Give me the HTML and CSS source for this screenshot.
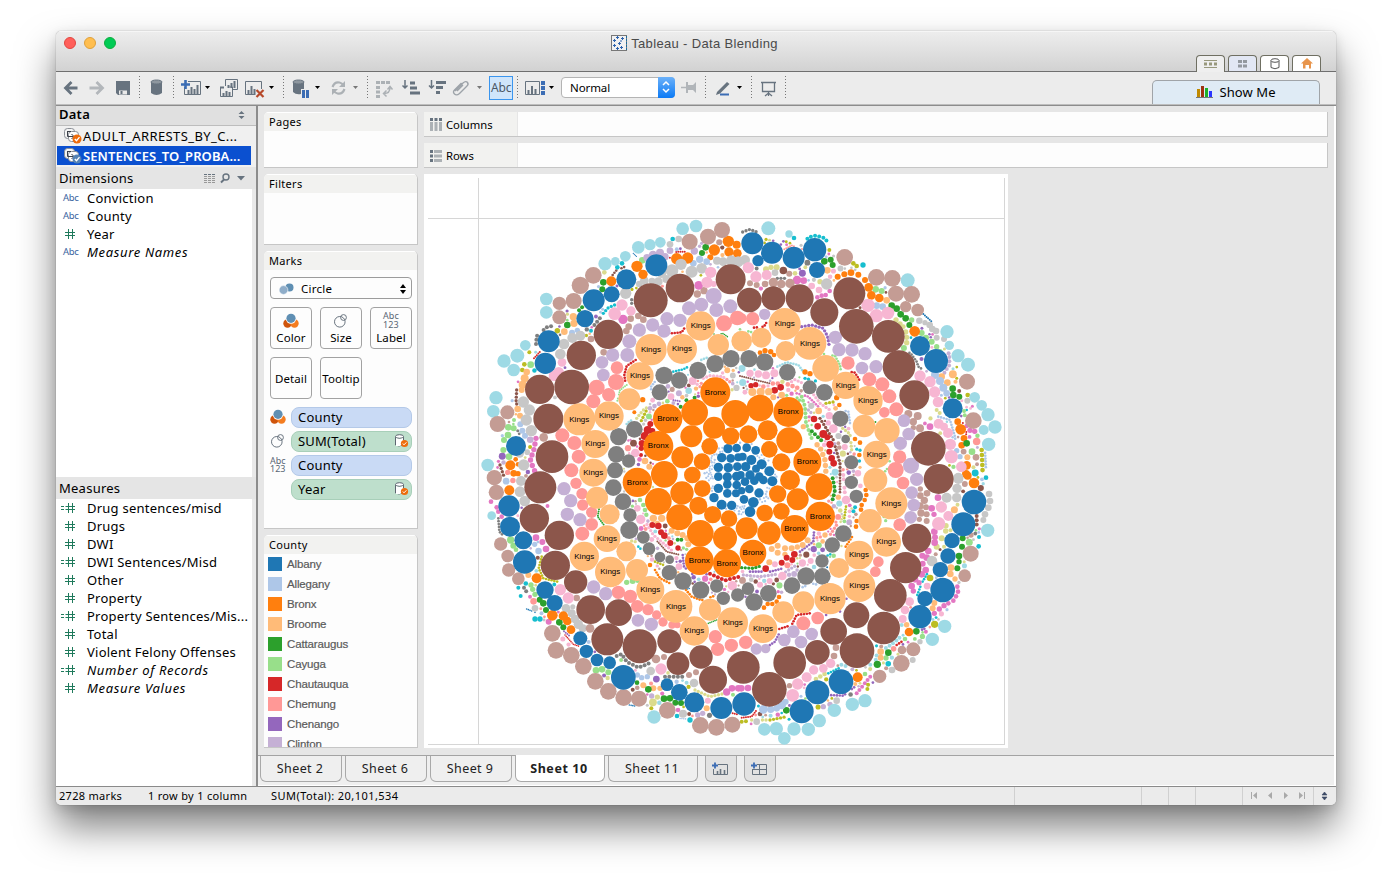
FILE: index.html
```html
<!DOCTYPE html>
<html lang="en">
<head>
<meta charset="utf-8">
<title>Tableau - Data Blending</title>
<link rel="stylesheet" href="styles.css">
</head>
<body>
<svg class="defs" width="0" height="0">
  <defs>
    <symbol id="hash" viewBox="0 0 16 12"><path d="M6.5 1v10M10.5 1v10M3 4.5h10M3 7.5h10" stroke="#1f7a5c" stroke-width="1" fill="none"/></symbol>
    <symbol id="calc" viewBox="0 0 16 12" overflow="visible"><path d="M6.5 1v10M10.5 1v10M3.500 4.5h9.500M3.500 7.5h9.500M-1 4.500h3M-1 7.500h3" stroke="#1f7a5c" stroke-width="1" fill="none"/></symbol>
    <symbol id="source" viewBox="0 0 18 16">
      <rect x=".5" y=".5" width="10" height="10" rx="3" fill="#f4f4f4" stroke="#8a8f96"/><rect x="4.500" y="3.500" width="10" height="10" rx="3" fill="#fff" stroke="#8a8f96"/>
      <path d="M3.500 3v5.500h6M7.500 6l2.500 2.500L7.500 11M3 3.500h4" stroke="#3b414a" fill="none"/><circle cx="13" cy="11" r="4.500" fill="currentColor"/><path d="M10.800 11l1.700 1.700 3-3.500" stroke="#fff" stroke-width="1.300" fill="none"/>
    </symbol>
    <symbol id="linked" viewBox="0 0 15 14"><path d="M1.500 3v8q3.500 2 7 0M9.500 3v3" stroke="#5d6670" fill="none"/><ellipse cx="5.500" cy="2.500" rx="4" ry="1.800" fill="#fff" stroke="#5d6670"/><path d="M2 4q3.500 2 7 0v6l-3 2H2z" fill="#fff"/><circle cx="10.500" cy="9.500" r="3.600" fill="#ee6c0c"/><path d="M8.800 9.500l1.200 1.300 2.400-2.500" stroke="#fff" fill="none"/></symbol>
    <symbol id="color" viewBox="0 0 16 16"><circle cx="4.500" cy="10.500" r="4.200" fill="#cf540b"/><circle cx="11.500" cy="10.500" r="4.200" fill="#f47d20"/><circle cx="8" cy="5.500" r="5.200" fill="#fff"/><circle cx="8" cy="5.300" r="4.600" fill="#5f8fb3"/></symbol>
    <symbol id="size" viewBox="0 0 16 16"><circle cx="6.800" cy="8.800" r="5.300" fill="none" stroke="#69747f"/><circle cx="10.500" cy="4.500" r="2.900" fill="none" stroke="#69747f"/></symbol>
  </defs>
</svg>
<div class="window">
  <header class="titlebar">
    <div class="lights"><i class="red"></i><i class="amber"></i><i class="green"></i></div>
    <div class="title">
      <svg width="16" height="16" viewBox="0 0 16 16"><rect x=".5" y=".5" width="15" height="15" fill="#f1f1f1" stroke="#777"/><path d="M2 5.500h3M3.500 4v3M5 2.500h3M6.500 1v3M10 3.500h3M11.500 2v3M7 8.500h3M8.500 7v3M2 10.500h3M3.500 9v3M5 13.500h3M6.500 12v3M9 12.500h3M10.500 11v3M9 6h2" stroke="#2c62ae" fill="none"/><path d="M15.500 1v14" stroke="#1c6c9c" stroke-dasharray="2 1"/></svg>
      <span>Tableau - Data Blending</span>
    </div>
    <div class="modes">
      <span class="mode current"><svg width="14" height="8"><path d="M0 .5h13M0 7.500h13" stroke="#98987c"/><path d="M0 4h14" stroke="#98987c" stroke-width="3" stroke-dasharray="3 2"/></svg></span>
      <span class="mode blue"><svg width="10" height="8"><path d="M0 1.500h10M0 6h10" stroke="#93989f" stroke-width="3" stroke-dasharray="4 1"/></svg></span>
      <span class="mode"><svg width="10" height="12"><path d="M1 2.500v7q4 2.500 8 0v-7" fill="none" stroke="#555"/><ellipse cx="5" cy="2.500" rx="4" ry="1.800" fill="#fff" stroke="#555"/></svg></span>
      <span class="mode"><svg width="12" height="11"><path d="M6 0l6 5.500H0z" fill="#e8954c"/><path d="M2 5h8v5.500H8V7H4.500v3.500H2z" fill="#e8954c"/></svg></span>
    </div>
  </header>

  <div class="toolbar">
    <svg class="seg" width="84" height="31" viewBox="56 72 84 31">
      <path d="M77.500 88H66M71.500 82l-6 6 6 6" stroke="#67737f" stroke-width="2.800" fill="none"/><path d="M89.500 88h12M96.500 82l6 6-6 6" stroke="#b3b7bb" stroke-width="2.800" fill="none"/>
      <path d="M116 81h14v14h-12l-2-2z" fill="#67737f"/><path d="M119 90.500h8v4h-8z" fill="#e9e9e9"/><path d="M120.500 91h2v3h-2z" fill="#67737f"/>
    </svg>
    <svg class="seg" width="34" height="31" viewBox="140 72 34 31"><path d="M151 82v11q5.500 4 11 0V82z" fill="#67737f"/><ellipse cx="156.500" cy="82" rx="5.500" ry="2" fill="#8e979f" stroke="#67737f"/></svg>
    <svg class="seg" width="110" height="31" viewBox="174 72 110 31">
      <path d="M188 81.500h12.500v13H184.500V87" fill="none" stroke="#67737f"/><path d="M188.500 94v-4M191.500 94v-7M194.500 94v-5M197.500 94v-9" stroke="#67737f" stroke-width="2"/><path d="M181 84.500h9M185.500 80v9" stroke="#3c6db4" stroke-width="2.600"/><path d="M205 86h5l-2.500 3z"/>
      <path d="M225.500 86v-6.500h12v10h-4.500M220.500 87v9.500h12v-9.500h-3" fill="none" stroke="#67737f"/><path d="M220 87.500h4M228.500 88v-3M231.500 88v-5M234.500 88v-7M223.500 96v-3M226.500 96v-5M229.500 96v-4" stroke="#67737f" stroke-width="2"/>
      <path d="M261.500 89v-7.500h-16v13h10" fill="none" stroke="#67737f"/><path d="M248.500 94v-4M251.500 94v-8M254.500 94v-5" stroke="#67737f" stroke-width="2"/><path d="M256.500 90l7 7M263.500 90l-7 7" stroke="#b6492a" stroke-width="2.200"/><path d="M269 86h5l-2.500 3z"/>
    </svg>
    <svg class="seg" width="84" height="31" viewBox="284 72 84 31">
      <path d="M293 82v10q3 3 8 2v-5h3v-7z" fill="#67737f"/><ellipse cx="298.500" cy="82" rx="5.500" ry="2" fill="#8e979f" stroke="#67737f"/><path d="M303.500 90v8M307.500 90v8" stroke="#3c6db4" stroke-width="3"/><path d="M315 86h5l-2.500 3z"/>
      <path d="M332.500 87q2-5.500 7-4.500 2.500.500 4 3M344.500 89q-2 5.500-7 4.500-2.500-.500-4-3" fill="none" stroke="#acb1b5" stroke-width="2.200"/><path d="M345 81v6h-6zM332 95v-6h6z" fill="#acb1b5"/><path d="M353 86h5l-2.500 3z" fill="#777"/>
    </svg>
    <svg class="seg" width="150" height="31" viewBox="368 72 150 31">
      <path d="M376 82.500h14" stroke="#acb1b5" stroke-width="3" stroke-dasharray="4 1"/><path d="M378 86v12" stroke="#acb1b5" stroke-width="4" stroke-dasharray="3 1.500"/><path d="M384 93.500q6 0 6-6M386.500 90.500l-3 3 3 3M387.500 89.500l2.500-3 2.500 3" fill="none" stroke="#acb1b5" stroke-width="1.500"/>
      <path d="M405 80v8M402.500 85.500l2.500 2.500 2.500-2.500" stroke="#67737f" stroke-width="1.500" fill="none"/><path d="M410 83h5M410 88h7M410 93h10" stroke="#67737f" stroke-width="3.200"/><path d="M431.500 80v8M429 85.500l2.500 2.500 2.500-2.500" fill="none" stroke="#67737f" stroke-width="1.500"/><path d="M436 82.500h10M436 87.500h7M436 92.500h4" stroke="#67737f" stroke-width="3.200"/>
      <path d="M455 91l8-8q3-2.500 4.500-.500t-1 4l-7 7q-3 2.500-5 .500t0-4l7-7M457 91l6-6" fill="none" stroke="#9da3a9" stroke-width="1.400"/><path d="M477 86h5l-2.500 3z" fill="#777"/>
      <rect x="489.500" y="76.500" width="23" height="23" fill="#cfe5fb" stroke="#3a95ee"/><text x="491" y="92" class="abc-tool">Abc</text>
    </svg>
    <div class="fit seg">
      <svg width="43" height="31" viewBox="518 72 43 31"><path d="M525.500 81.500h14v13h-14z" fill="none" stroke="#67737f" stroke-width="1"/><path d="M528.500 94v-4M532 94v-8M535.500 94v-5" stroke="#67737f" stroke-width="2"/><path d="M543 81v14" stroke="#3c6db4" stroke-width="4" stroke-dasharray="4 1"/><path d="M549 86h5l-2.500 3z"/></svg>
      <div class="select"><span>Normal</span><b><svg width="16" height="20"><path d="M5 8l3-3 3 3M5 12l3 3 3-3" fill="none" stroke="#fff" stroke-width="1.500"/></svg></b></div>
      <svg width="30" height="31" viewBox="675 72 30 31"><path d="M681 87.500h6" stroke="#b1b5b9" stroke-width="1.500"/><path d="M686 82h2v3h5l3-3v11l-3-3h-5v3h-2z" fill="#b1b5b9"/></svg>
    </div>
    <svg class="seg" width="46" height="31" viewBox="706 72 46 31"><path d="M717 92l10-10 2.500 2-9.500 9.500-4 1.500z" fill="#67737f"/><path d="M720 94.500h9" stroke="#3c6db4" stroke-width="2"/><path d="M737 86h5l-2.500 3z"/></svg>
    <svg class="seg" width="34" height="31" viewBox="752 72 34 31"><path d="M761 82.500h15M762.500 83v8.500h12V83M768.500 92v4M765 96l3.500-3 3.500 3" fill="none" stroke="#67737f" stroke-width="1.300"/></svg>
    <div class="showme"><svg width="17" height="13"><path d="M2.500 4v8" stroke="#c08a00" stroke-width="3"/><path d="M6.500 1v11" stroke="#9e3210" stroke-width="3"/><path d="M10.500 3v9" stroke="#1fb02a" stroke-width="3"/><path d="M14.500 6v6" stroke="#2a35ff" stroke-width="3"/><path d="M0 12.500h17" stroke="#777"/></svg>Show Me</div>
  </div>

  <main class="body">
    <aside class="data">
      <div class="head bold">Data<svg width="7" height="8"><path d="M.5 3L3.500 0l3 3zM.5 5l3 3 3-3z" fill="#67737f"/></svg></div>
      <div class="sources">
        <div class="src orange"><svg width="19" height="16" viewBox="0 0 19 16"><use href="#source" width="18" height="16"/></svg>ADULT_ARRESTS_BY_C...</div>
        <div class="src sel"><svg width="19" height="16" viewBox="0 0 19 16"><use href="#source" width="18" height="16"/></svg>SENTENCES_TO_PROBA...</div>
      </div>
      <div class="head dims">Dimensions<svg width="46" height="12"><path d="M1 2.500h12" stroke="#67737f" stroke-dasharray="3 1"/><path d="M1 4.500h12M1 6.500h12M1 8.500h12M1 10.500h12" stroke="#999" stroke-dasharray="3 1"/><circle cx="23" cy="5" r="3" fill="none" stroke="#67737f" stroke-width="1.400"/><path d="M21 7.500l-3 3" stroke="#67737f" stroke-width="2"/><path d="M34 4h8l-4 4.500z" fill="#67737f"/></svg></div>
      <ul class="fields dimlist">
        <li><em class="abc">Abc</em>Conviction</li><li><em class="abc">Abc</em>County</li>
        <li><svg width="16" height="12"><use href="#hash"/></svg>Year</li><li class="it"><em class="abc">Abc</em>Measure Names</li>
      </ul>
      <div class="head meas">Measures</div>
      <ul class="fields">
        <li><svg width="16" height="12"><use href="#calc"/></svg>Drug sentences/misd</li><li><svg width="16" height="12"><use href="#hash"/></svg>Drugs</li>
        <li><svg width="16" height="12"><use href="#hash"/></svg>DWI</li><li><svg width="16" height="12"><use href="#calc"/></svg>DWI Sentences/Misd</li>
        <li><svg width="16" height="12"><use href="#hash"/></svg>Other</li><li><svg width="16" height="12"><use href="#hash"/></svg>Property</li>
        <li><svg width="16" height="12"><use href="#calc"/></svg>Property Sentences/Mis...</li><li><svg width="16" height="12"><use href="#hash"/></svg>Total</li>
        <li><svg width="16" height="12"><use href="#hash"/></svg>Violent Felony Offenses</li><li class="it"><svg width="16" height="12"><use href="#calc"/></svg>Number of Records</li>
        <li class="it"><svg width="16" height="12"><use href="#hash"/></svg>Measure Values</li>
      </ul>
    </aside>
    <section class="work">
      <div class="canvas">
        <div class="cards">
          <div class="card pages"><h3>Pages</h3></div>
          <div class="card filters"><h3>Filters</h3></div>
          <div class="card marks"><h3>Marks</h3>
            <div class="marktype"><svg width="16" height="12"><circle cx="10.500" cy="4.500" r="4" fill="#5f8fb3"/><circle cx="4.500" cy="7" r="4.400" fill="#8fadc9" stroke="#fff" stroke-width=".6"/></svg><span>Circle</span><svg width="6" height="10"><path d="M0 4l3-4 3 4zM0 6l3 4 3-4z"/></svg></div>
            <div class="btns">
              <div class="btn"><svg width="16" height="16"><use href="#color"/></svg>Color</div>
              <div class="btn"><svg width="16" height="16"><use href="#size"/></svg>Size</div>
              <div class="btn"><small>Abc<br>123</small>Label</div>
              <div class="btn">Detail</div><div class="btn">Tooltip</div>
            </div>
            <div class="pills">
              <div class="row"><svg width="16" height="16"><use href="#color"/></svg><div class="pill">County</div></div>
              <div class="row"><svg width="16" height="16"><use href="#size"/></svg><div class="pill green">SUM(Total)<svg width="15" height="14"><use href="#linked"/></svg></div></div>
              <div class="row"><small>Abc<br>123</small><div class="pill">County</div></div>
              <div class="row"><small></small><div class="pill green">Year<svg width="15" height="14"><use href="#linked"/></svg></div></div>
            </div>
          </div>
          <div class="card legend"><h3>County</h3>
            <ul>
              <li><i class="k1"></i>Albany</li><li><i class="k2"></i>Allegany</li><li><i class="k3"></i>Bronx</li><li><i class="k4"></i>Broome</li><li><i class="k5"></i>Cattaraugus</li>
              <li><i class="k6"></i>Cayuga</li><li><i class="k7"></i>Chautauqua</li><li><i class="k8"></i>Chemung</li><li><i class="k9"></i>Chenango</li><li><i class="k10"></i>Clinton</li>
            </ul>
          </div>
        </div>
        <div class="sheet">
          <div class="shelf"><div><svg width="12" height="13"><path d="M0 1.500h12" stroke="#67737f" stroke-width="3" stroke-dasharray="3 1.500"/><path d="M0 8.500h12" stroke="#acb1b5" stroke-width="9" stroke-dasharray="3 1.500"/></svg>Columns</div></div>
          <div class="shelf"><div><svg width="12" height="12"><path d="M1.500 0v12" stroke="#67737f" stroke-width="3" stroke-dasharray="3 1.500"/><path d="M8 0v12" stroke="#acb1b5" stroke-width="8" stroke-dasharray="3 1.500"/></svg>Rows</div></div>
          <svg id="view" class="view" width="584" height="574" viewBox="424 174 584 574"></svg>
        </div>
      </div>
      <nav class="tabs">
        <span>Sheet 2</span><span>Sheet 6</span><span>Sheet 9</span><span class="on">Sheet 10</span><span class="wide">Sheet 11</span>
        <span class="add a1"><svg width="16" height="14"><path d="M6 2.500h9.500v10H1.500V7" fill="none" stroke="#67737f"/><path d="M5.500 12V9M8.500 12V7M12.500 12V8" stroke="#67737f" stroke-width="1.600"/><path d="M0 3.500h6M3 .5v6" stroke="#3c6db4" stroke-width="1.800"/></svg></span>
        <span class="add"><svg width="16" height="14"><path d="M6 2.500h9.500v10H1.500V7M1.500 7.500h14M8.500 2.500v10" fill="none" stroke="#67737f"/><path d="M0 3.500h6M3 .5v6" stroke="#3c6db4" stroke-width="1.800"/></svg></span>
      </nav>
    </section>
  </main>
  <footer class="status">
    <span class="s1">2728 marks</span><span class="s2">1 row by 1 column</span><span class="s3">SUM(Total): 20,101,534</span>
    <svg class="nav" width="322" height="18" viewBox="1014 787 322 18"><path d="M1014.500 787v18M1141.500 787v18M1168.500 787v18M1195.500 787v18M1242.500 787v18M1313.500 787v18" stroke="#d0d0d0"/><path d="M1251 792h1v7h-1zM1257 792v7l-4-3.500zM1272 792v7l-4-3.500zM1284 792v7l4-3.500zM1299 792v7l4-3.500zM1304 792h1v7h-1z" fill="#a9a9a9"/><path d="M1322 795l2.500-3 2.500 3zM1322 797l2.500 3 2.500-3z" fill="#3c4a66" stroke="#3c4a66" stroke-width=".6"/></svg>
  </footer>
</div>
<script src="chart.js"></script>
</body>
</html>
```
FILE: styles.css
```css
* { box-sizing: border-box; }
body { margin: 0; padding: 31px 56px 0; height: 885px; overflow: hidden; background: #fff; font: 13px/18px "Noto Sans", "Open Sans", sans-serif; color: #000; }
.defs { position: absolute; }
svg { display: block; flex: none; }
ul { list-style: none; margin: 0; padding: 0; }
h3 { margin: 0; }
.window { width: 1280px; height: 774px; display: flex; flex-direction: column; overflow: hidden; border-radius: 5px; background: #ebebeb; box-shadow: 0 0 1px rgba(0,0,0,.5), 0 22px 38px rgba(0,0,0,.5), 0 4px 12px rgba(0,0,0,.12); }

.titlebar { height: 41px; flex: none; display: grid; grid-template-columns: 1fr auto 1fr; background: linear-gradient(#ededed, #d2d2d2); border-bottom: 1px solid #6f6f6f; border-top: 1px solid #f6f6f6; }
.lights { display: flex; gap: 8px; padding: 5px 8px; }
.lights i { width: 12px; height: 12px; border-radius: 50%; border: 1px solid #e2463f; background: #ff5f5a; }
.lights .amber { background: #ffbe4f; border-color: #dfa03a; }
.lights .green { background: #00cb55; border-color: #0ead3e; }
.title { display: flex; gap: 4px; padding-top: 3px; padding-right: 3px; font: 13px/17px "Liberation Sans", sans-serif; letter-spacing: .34px; color: #4a4a4a; }
.modes { display: flex; justify-content: flex-end; align-items: flex-end; gap: 3px; padding-right: 15px; }
.mode { width: 29px; height: 16px; display: flex; align-items: center; justify-content: center; border: 1px solid #6f6f62; border-bottom: 0; border-radius: 4px 4px 0 0; background: #fff; }
.mode.blue { background: #e2e7f4; }
.mode.current { background: #efefef; height: 17px; margin-bottom: -1px; }

.toolbar { height: 34px; flex: none; display: flex; align-items: flex-start; background: #ececec; border-bottom: 1px solid #8c8c8c; box-shadow: inset 0 -1px #bdbdbd; }
.toolbar > .seg { background: repeating-linear-gradient(#777 0 1px, transparent 1px 3px) right 4px / 1px 22px no-repeat; }
.abc-tool { font: 12px "Noto Sans", sans-serif; letter-spacing: -.2px; fill: #4c5866; }
.fit { width: 188px; height: 31px; display: flex; align-items: flex-start; }
.select { width: 114px; height: 21px; margin: 5px 0 0; display: flex; justify-content: space-between; border: 1px solid #b4b4b4; border-radius: 4px; background: #fff; font-size: 11.5px; line-height: 19px; padding-left: 8px; letter-spacing: -.1px; }
.select b { width: 17px; margin: -1px; height: 21px; border-radius: 0 4px 4px 0; background: linear-gradient(#6bb1f9, #0c7af5); }
.showme { width: 168px; height: 24px; margin: 8px 16px 0 auto; display: flex; align-items: center; justify-content: center; gap: 6px; border: 1px solid #a0a4a8; border-bottom: 0; border-radius: 5px 5px 0 0; background: #dfebf5; letter-spacing: .1px; padding-bottom: 2px; }

.body { flex: 1; min-height: 0; display: flex; background: #fff; }
.data { width: 202px; flex: none; display: flex; flex-direction: column; border-right: 2px solid #8c8c8c; background: linear-gradient(90deg, #fff 196px, #e9e9e9 196px); }
.head { height: 20px; flex: none; padding: 0 11px 0 3px; display: flex; justify-content: space-between; align-items: center; background: #e5e5e5; letter-spacing: .25px; }
.head.bold { font-weight: 600; background: #e0e0e0; border-bottom: 1px solid #bdbdbd; line-height: 17px; padding-bottom: 2px; }
.head.dims { height: 22px; }
.head.meas { height: 22px; }
.head.dims svg { margin-right: -4px; }
.sources { height: 41px; background: #f0f0f0; }
.src { height: 19px; margin: 0 5px 1px 1px; padding-left: 7px; display: flex; align-items: center; white-space: nowrap; letter-spacing: .4px; }
.src.orange { color: #ee6c0c; -webkit-text-fill-color: #000; }
.src.sel { background: #0b50d0; color: #5583b5; -webkit-text-fill-color: #fff; font-weight: 600; letter-spacing: .1px; }
.fields li { height: 18px; display: grid; grid-template-columns: 25px 1fr; align-items: center; padding-left: 6px; letter-spacing: .24px; white-space: nowrap; line-height: 18px; }
.fields svg { overflow: visible; }
.dimlist { height: 288px; }
.fields .it { font-style: italic; letter-spacing: .65px; }
.abc { font: 9.500px/18px "Noto Sans", sans-serif; color: #3a63a0; letter-spacing: -.3px; padding-left: 1px; }

.work { flex: 1; min-width: 0; display: flex; flex-direction: column; }
.canvas { height: 649px; flex: none; display: flex; gap: 6px; padding: 6px 6px 0 6px; background: #e6e6e6; margin-right: 2px; }
.cards { width: 154px; display: flex; flex-direction: column; gap: 6px; }
.card { background: #fdfdfd; border: solid #c6c6c6; border-width: 0 1px 1px 0; border-radius: 5px 5px 0 0; overflow: hidden; }
.card h3 { height: 19px; padding-left: 5px; background: #f2f2f0; font-size: 11px; font-weight: 400; line-height: 17px; letter-spacing: .3px; border-top: 1px solid #fff; }
.pages { height: 56px; } .filters { height: 71px; } .marks { height: 278px; } .legend { height: 213px; }
.marktype { height: 22px; margin: 7px 5px 8px 6px; padding: 1px 5px 0 8px; display: flex; align-items: center; gap: 6px; border: 1px solid #9c9c9c; border-radius: 4px; font-size: 11.500px; letter-spacing: .25px; }
.marktype span { flex: 1; }
.btns { display: grid; grid-template-columns: repeat(3, 42px); grid-auto-rows: 42px; gap: 8px; padding-left: 6px; }
.btn { display: flex; flex-direction: column; align-items: center; justify-content: center; border: 1px solid #a2a2a2; border-radius: 4px; font-size: 11.500px; line-height: 14px; letter-spacing: .1px; padding-top: 1px; gap: 2px; }
small { font-size: 9px; line-height: 8.500px; color: #596674; width: 16px; }
.pills { padding: 7px 5px 0 6px; display: flex; flex-direction: column; gap: 2px; }
.row { display: flex; align-items: center; gap: 5px; height: 22px; }
.row small { flex: none; }
.pill { flex: 1; height: 21px; padding: 0 2px 0 6px; display: flex; align-items: center; justify-content: space-between; border: 1px solid #b4c9e8; border-radius: 8px; background: #c9daf5; letter-spacing: .2px; }
.pill.green { background: #bedfcc; border-color: #a8cfb9; }
.legend ul { font: 11.500px/20px "Liberation Sans", sans-serif; color: #5a5a5a; -webkit-text-stroke: .2px #5a5a5a; letter-spacing: -.15px; }
.legend li { height: 20px; padding-left: 4px; display: flex; align-items: center; gap: 5px; }
.legend i { width: 14px; height: 14px; }
.k1 { background: #1f77b4; } .k2 { background: #aec7e8; } .k3 { background: #ff7f0e; } .k4 { background: #ffbb78; } .k5 { background: #2ca02c; }
.k6 { background: #98df8a; } .k7 { background: #d62728; } .k8 { background: #ff9896; } .k9 { background: #9467bd; } .k10 { background: #c5b0d5; }
.sheet { flex: 1; display: flex; flex-direction: column; gap: 6px; }
.shelf { height: 25px; background: #fdfdfd; border: solid #c6c6c6; border-width: 0 1px 1px 0; }
.shelf div { width: 94px; height: 24px; padding: 1px 0 0 6px; display: flex; align-items: center; gap: 4px; background: #f2f2f0; border-right: 1px solid #e6e6e6; font-size: 11.250px; letter-spacing: 0; }
.view { background: #fff; }
.view text { font: 8px "Liberation Sans", sans-serif; text-anchor: middle; }

.tabs { height: 30px; display: flex; align-items: flex-start; gap: 3px; margin-right: 2px; padding-left: 2px; background: #efefef; border-top: 1px solid #a3a3a3; }
.tabs span { width: 82px; height: 26px; display: flex; align-items: center; justify-content: center; border: 1px solid #a9a9a9; border-top: 0; border-radius: 0 0 6px 6px; font-size: 12.500px; letter-spacing: .4px; padding-right: 2px; color: #222; }
.tabs .on { width: 90px; background: #fff; font-weight: 700; margin-top: -1px; height: 27px; padding-top: 1px; letter-spacing: .6px; }
.tabs .wide { width: 90px; }
.tabs .add { width: 32px; background: #e2e2e2; margin-right: 4px; }
.tabs .a1 { margin-left: 4px; }
.status { height: 19px; flex: none; display: flex; border-top: 1px solid #8a8a8a; background: #ebebeb; padding-left: 3px; font-size: 11px; line-height: 18px; letter-spacing: .3px; }
.s1 { width: 89px; } .s2 { width: 123px; } .s3 { letter-spacing: .45px; }
.nav { margin-left: auto; }
```
FILE: chart.js
```js
// Packed-circle view. Marks are stored per tile in thirds of a pixel: x, y, radius.
const COLORS = { B:'#1f77b4', b:'#aec7e8', O:'#ff7f0e', o:'#ffbb78', G:'#2ca02c', g:'#98df8a', R:'#d62728', r:'#ff9896', P:'#9467bd', p:'#c5b0d5', N:'#8c564b', n:'#c49c94', M:'#e377c2', m:'#f7b6d2', Y:'#7f7f7f', y:'#c7c7c7', L:'#bcbd22', l:'#dbdb8d', C:'#17becf', c:'#9edae5' };
const TILES = [
 { left:480, top:210,
  kings:'662,348,44 513,419,47 606,417,45 480,498,41 298,628,48 387,618,44 346,702,42 340,788,42',
  bronx:'706,547,45 563,626,44 535,708,45',
  N:'512,271,51 600,234,43 752,208,45 385,373,44 304,436,44 275,531,52 179,538,44 205,626,45 216,740,49',
  B:'529,166,33 439,208,30 395,253,24 341,271,33 315,326,26 206,394,33 196,460,32 108,708,30 744,716,14 770,714,13 725,743,14 752,745,13 775,742,12 715,772,14 745,773,14 772,770,13 715,800,13 742,801,14 770,799,14',
  c:'648,48,19 608,56,19 475,112,19 510,104,17 541,97,16 436,139,16 375,161,20 406,154,13 199,267,19 199,307,19 136,406,16 112,437,21 72,453,20 101,480,19 48,563,20 40,604,19 23,765,19',
  n:'726,60,24 684,80,24 629,95,24 340,196,25 301,226,26 281,273,24 238,280,20 238,322,21 82,607,21 53,642,24 43,803,23 191,682,13 371,427,10 333,387,10 475,318,10 452,326,10 490,329,10 446,350,10 439,363,10 652,252,11 672,242,11',
  o:'715,404,32 448,568,33 140,486,10 134,505,12 128,524,12 125,540,9 280,320,11 282,340,11 253,365,10 113,597,10 120,617,9 495,753,10 508,770,9',
  Y:'552,496,26 598,511,25 539,547,24 654,481,26 705,461,26 753,446,26 463,658,25 416,680,26 409,733,25 446,753,20 405,781,24',
  O:'644,607,40 766,612,42 702,653,33 634,679,33 752,678,26 689,709,25 607,742,33 666,755,25 553,793,40 590,146,17 623,144,17 703,120,17 745,94,17 747,126,14 770,104,12 772,130,13 471,169,17 489,193,14 394,214,15 691,142,9 91,766,15 488,569,8 463,607,6 107,748,7 114,763,7 101,790,10 114,791,8',
  r:'732,340,24 772,324,22 411,473,19 408,516,24 350,533,24 386,554,20 340,574,21 247,676,21 283,699,21 296,740,21 274,781,21',
  p:'701,258,24 664,284,21 627,295,21 709,300,21 751,289,21 561,326,20 600,331,20 518,345,20 478,360,20 552,363,20 448,394,21 398,435,20 442,435,21 366,457,19 370,495,19 519,135,13 540,128,12 555,140,11 501,143,11 570,122,10 643,123,11',
  m:'692,187,17 681,217,17 701,222,9 426,285,17 453,303,14 404,311,19 222,497,16 236,487,16 246,457,13 466,729,13 638,513,12 573,560,10',
  y:'576,182,19 603,163,17 635,185,18 665,175,16 545,190,14 559,207,12 516,213,10 493,212,13 478,222,10 437,250,17 535,215,13 252,402,16 277,384,15 301,377,15 241,432,16 130,576,17 148,600,17 139,630,17 154,662,17 131,765,17 119,730,13 754,152,16 775,155,16 729,155,13 711,152,12 570,103,10 596,87,10',
  R:'511,642,9 503,660,12 517,663,9 494,678,12 486,700,10 484,715,8 483,735,6',
  G:'677,112,10 666,129,9 370,217,10 367,238,9 262,345,10',
  g:'487,151,10 152,464,10 85,652,10 101,655,9 102,630,6 84,675,10 72,690,9 87,740,10 70,720,9',
  M:'656,226,13 429,328,14', b:'640,160,10 659,148,11 680,155,10 292,361,8 276,368,9 121,643,9 127,662,9 135,677,9',
  L:'127,480,7 133,463,7 148,427,6', C:'578,87,7 412,172,7 426,160,7 333,362,6', l:'373,187,7' },
 { left:740, top:210,
  kings:'134,342,48 210,400,49 317,526,41 384,572,44 410,733,41', bronx:'145,606,45 202,756,42',
  N:'28,270,37 100,265,36 179,265,42 253,307,42 328,250,48 349,349,52 445,379,49 477,470,49 523,556,45 565,715,52',
  B:'37,100,33 96,128,33 161,143,33 224,119,35 231,180,24 54,152,17 540,408,30 588,453,36 638,595,30 20,713,13 47,721,13 8,740,12 34,750,15 65,763,15 17,770,14 48,776,12 88,784,15 2,795,12 30,795,14 58,800,13',
  c:'85,55,21 147,72,11 503,211,21 621,365,20 628,406,14 654,437,20 684,464,21 704,562,16 725,586,16 744,614,20 731,660,15 765,651,20 746,703,20',
  n:'314,142,25 409,202,25 457,205,25 468,251,24 515,253,25 497,290,17 533,300,19 681,515,24 700,632,25 30,220,9 50,225,9 75,222,10 100,217,14 124,222,13 150,220,14 505,612,12 533,618,12 520,635,11 540,655,12 520,653,8 708,742,10',
  o:'5,393,31 64,383,30 137,423,30 257,475,40 372,648,34 441,662,38 262,181,10 440,271,10 37,546,12 62,545,12 86,545,11 100,562,9 125,555,10 605,500,10 622,518,10 682,742,9',
  Y:'27,446,26 74,456,26 142,487,25 209,532,21 253,547,25 301,626,24 317,687,13 334,757,21',
  O:'60,594,40 83,661,30 25,673,27 148,691,39 88,718,25 124,757,27 293,200,9 313,193,9 333,188,10 355,194,9 375,210,9 386,232,13 394,256,13 418,264,13 524,364,16 653,635,10 662,658,16 672,685,10 665,706,10 680,766,13 678,792,12 195,486,8 210,491,8 60,428,7 75,422,8 92,425,8 102,435,7 290,563,8 298,585,7 345,687,7 360,698,7 358,735,7',
  r:'38,326,20 4,325,16 324,459,20 388,508,21 427,523,21 448,559,21 469,598,21 433,607,16 479,741,20 467,780,24',
  p:'74,313,17 286,382,20 297,419,20 336,420,20 375,431,20 366,474,19 408,470,20 492,632,19 506,672,19 481,700,20 513,767,24',
  m:'25,173,17 48,200,17 80,195,15 384,286,20 409,317,20 444,309,19 540,498,17 570,515,17 584,546,17 594,576,16 596,641,15 612,650,12 624,669,15 631,703,17 634,740,20 664,770,16 237,240,10 215,228,10 78,496,12 103,490,12 55,492,11 30,490,11 280,656,13 268,617,11',
  M:'171,210,13 191,212,10 232,262,7 245,257,7 257,255,7 269,243,7 570,650,10 690,661,8 704,664,8 680,648,7',
  G:'253,154,10 272,149,9 278,165,9 455,287,10 470,296,10 482,313,10 497,325,10 508,345,9 638,536,10 640,555,10 658,560,9 680,700,10',
  g:'407,238,10 425,243,9 545,369,9 558,383,9 575,395,9 590,410,8 600,425,8 515,330,8 696,725,10',
  y:'260,222,17 105,188,10 569,345,10 577,357,10 588,363,10 590,383,9 612,387,9 655,803,15 15,150,15 555,338,8 682,572,9',
  R:'222,627,10 233,649,10 250,672,12 262,682,9 270,703,11 268,725,9 275,745,10 281,760,10 104,541,10 122,532,10 33,527,8 47,524,8',
  b:'410,287,10 428,290,10 585,495,12 600,513,12 610,533,12 620,550,10 650,722,8 660,740,8',
  l:'78,178,9 93,172,8 110,172,9 165,190,7 240,215,8 468,330,8 480,342,8 490,350,7 497,366,8 500,382,8 500,398,8', L:'340,160,7 350,168,7 683,555,7 268,120,6', C:'369,165,8 162,84,7 680,600,4' },
 { left:480, top:475,
  kings:'381,191,40 313,244,44 391,291,46 511,345,42 588,394,49 643,468,44 758,443,46', bronx:'472,22,44 658,257,43 741,265,42',
  N:'181,37,48 163,130,44 238,181,44 226,271,44 287,321,35 332,404,43 416,413,40 382,493,48 479,514,51 568,499,36 594,566,34 663,546,35 699,614,42',
  B:'87,93,32 90,155,30 130,196,27 134,261,35 195,345,26 224,384,24 301,490,21 319,529,20 351,555,19 389,563,19 430,607,37 561,629,19 598,652,25 643,682,30 724,699,33 715,40,14 702,68,14 742,28,13 770,30,13 742,55,13 768,55,12 725,89,15 755,91,14',
  c:'35,122,13 522,726,20',
  n:'49,52,23 62,207,20 83,243,19 86,285,20 115,311,19 217,475,25 228,526,25 274,541,25 310,574,25 346,619,25 385,649,25 431,668,25 477,671,24 562,706,25 661,751,25 709,757,25 757,749,24 290,369,10 330,460,13 528,552,13 552,546,9 627,600,9 648,592,9',
  o:'351,68,33 389,118,30 439,229,30 471,285,33 690,404,33 490,631,9 520,130,11 545,130,11 532,145,8 575,167,9 592,175,9 608,180,9 622,190,9 625,208,9 520,640,9 540,640,8 680,700,9 145,300,9',
  Y:'400,38,25 429,80,25 450,120,20 448,165,27 490,187,19 507,221,19 540,246,16 569,254,13 568,293,23 609,318,26 662,345,26 710,333,20 730,370,20 773,360,20',
  O:'535,79,40 606,54,35 667,41,25 655,92,27 598,127,39 661,175,40 735,189,36 698,119,26 747,131,25 637,0,25 88,46,15 170,310,15 217,421,16 250,423,14 262,438,13 273,464,13 510,270,7',
  r:'288,25,17 306,56,17 308,90,17 335,112,17 335,148,19 307,176,21 415,352,20 451,364,20 472,394,19 504,404,17 530,420,14 549,441,14 576,450,11 592,450,10 706,485,20 713,523,20 754,511,20',
  p:'252,41,20 272,77,20 262,118,20 300,134,20 341,336,20 377,356,20 474,436,19 514,448,20 515,663,8 653,720,8 668,715,8',
  m:'241,344,17 265,369,17 543,582,17 482,133,14 472,100,10 597,275,10 757,332,14',
  y:'123,18,15 120,50,16 134,78,16 165,400,10 258,400,13 275,415,12 285,432,13 295,448,14 308,460,12 512,588,13 642,624,13 609,716,12',
  M:'168,188,10 187,201,9 198,222,10 206,440,9 594,705,7 740,651,11 756,640,10 775,640,10 33,80,7 50,97,7 65,125,7 55,110,7',
  g:'92,195,11 100,212,9 108,224,7 348,586,10 366,583,10 385,592,9 458,318,9 440,322,8 473,317,7 153,330,8 158,343,8 165,358,8 480,75,7 490,90,7 495,105,7',
  G:'179,374,9 190,385,10 198,405,9 238,442,10 250,457,9 505,643,10 552,671,10 570,670,10 586,683,9 603,684,9 471,623,7 593,194,6 604,194,6',
  R:'517,150,9 535,153,10 543,172,9 553,182,10 571,204,9 594,219,8', C:'115,338,6 122,363,6 165,432,8 180,432,8 591,723,7 630,735,8', b:'472,600,8 485,608,8 502,605,8', L:'514,700,6' },
 { left:740, top:475,
  kings:'454,85,48 439,201,44 357,240,43 358,333,48 270,371,47 69,461,43', bronx:'241,124,44 164,162,42 39,234,40',
  N:'596,12,45 530,190,44 497,278,47 451,361,49 349,421,39 431,459,49 281,469,40 351,527,52 232,532,37 149,563,49 88,643,52 10,577,49 60,717,7',
  B:'702,81,37 670,148,36 636,197,23 624,243,23 601,284,23 608,345,37 555,371,23 540,425,35 303,620,37 232,652,36 185,709,36 12,687,35 97,19,15 70,15,13 43,17,13 57,54,14 28,42,13 40,82,16 12,73,13 30,110,16 15,20,13 5,47,11',
  c:'743,166,20 614,454,20 577,493,20 375,677,20 337,688,20 283,706,20 238,737,20 205,763,20 162,762,20 133,790,19 109,761,20 73,763,19',
  n:'692,236,24 674,302,19 520,523,21 486,525,13 484,565,25 419,604,20 288,518,10 282,543,10 541,42,8 541,62,10 561,55,10 553,76,11 540,93,11 558,97,9 543,114,11 560,118,9 538,133,8 560,138,9 693,180,8',
  o:'406,15,36 390,137,35 297,279,30 190,382,33 130,412,33 95,222,9 113,212,9 113,233,9 135,220,9 135,238,8 155,220,9 172,216,8 188,210,9 203,196,9 88,262,9 255,180,8 633,278,10 631,297,10 645,312,8 583,384,9 578,400,9 422,530,10 422,548,9',
  Y:'334,22,20 349,64,20 310,176,25 277,210,23 246,258,20 198,303,26 247,304,25 156,332,25 85,355,25 42,381,26 24,341,19',
  O:'237,35,40 150,15,30 113,57,26 173,73,33 74,114,25 124,109,25 20,160,33 87,174,35 702,24,16 683,2,12 507,471,13 353,607,15 377,45,7 379,60,7 374,75,7 365,90,7 363,104,7 350,138,7 348,155,7 72,398,7 83,387,7 97,387,7 110,380,7 117,366,7',
  r:'489,24,19 479,149,19 415,260,16 406,290,16 233,429,19 190,445,21 17,502,20',
  p:'530,13,20 515,53,19 521,90,19 512,127,19 160,470,19 133,495,19 183,501,19 215,477,19 49,522,17 77,521,14 250,695,8 270,688,8',
  m:'604,96,17 625,123,15 596,146,20 509,380,13 495,405,13 488,432,12 221,585,14 250,580,13 272,565,14 200,607,15 173,627,17 158,661,19 318,75,13 187,264,11 212,258,9 127,303,13 89,318,9 60,329,9',
  y:'655,12,15 651,40,14 650,68,14 620,68,15 576,258,16 747,57,10 750,78,10 745,98,10 735,118,10 730,135,9 290,677,10 50,740,10 456,585,10 518,555,9 540,500,8',
  M:'594,68,10 575,100,10 582,118,8 583,170,10 585,187,9 584,203,10 565,228,10 547,242,9 560,248,10 548,266,9 557,285,10 545,298,10 525,313,10 537,323,8 515,333,10 520,348,8 652,335,7 654,350,7 648,364,7 640,377,7 625,385,7 612,392,8 598,402,8 583,415,8 4,640,10 24,639,10',
  G:'668,190,9 666,215,9 657,243,10 657,260,8 652,280,9 529,469,10 445,533,10 412,568,11 139,706,10',
  b:'70,703,13 92,703,11 110,700,10 125,690,13 137,680,9', l:'618,152,8 617,168,8 605,190,9 590,215,9 612,215,6',
  g:'437,137,5 432,125,5 495,492,7 375,597,7 438,549,8', C:'716,214,7 717,186,6 738,8,7',
  R:'140,248,9 163,238,10 125,263,9 157,255,9 77,281,10' }
];
// Strings of small equal dots: tile, colour, radius, polyline.
const CHAINS = [
 [0,'R',4,'533,395 545,380 572,370 605,367 613,355'],[0,'R',4,'467,450 440,468 433,495 436,516'],[0,'G',2.5,'702,372 730,371 742,380'],
 [0,'g',3,'412,572 420,540 442,524'],[0,'G',6,'288,310 308,290'],[0,'M',8,'168,685 160,728 150,745 158,770 165,785'],[0,'C',5,'370,310 385,293 408,283'],
 [0,'N',4,'398,195 408,182 440,168'],[0,'Y',6,'335,355 362,322 382,305'],[0,'Y',6,'168,402 170,378 200,352 215,348'],[0,'R',3,'162,445 180,425'],
 [0,'B',2,'460,130 470,140'],[0,'m',5,'670,505 690,497 730,500 753,540'],[0,'r',5,'660,530 672,500 720,492 755,520'],[0,'C',4,'580,485 610,478 625,470'],
 [0,'c',4,'625,468 670,447 700,437'],[0,'b',4,'515,555 513,530 525,515'],[0,'p',7,'510,595 540,580 580,583'],[0,'G',6,'602,590 620,570 655,560'],
 [0,'l',5,'470,625 490,600 520,580'],[0,'L',5,'484,632 500,600'],[0,'c',4,'440,642 450,632 495,630'],[0,'P',3,'580,570 605,575'],[0,'b',3,'712,710 695,740 688,780 700,808'],
 [0,'L',5,'308,395 322,372'],[0,'Y',5,'455,280 455,260'],[0,'N',5,'110,540 108,580 118,590'],[0,'R',3,'560,152 590,125 615,125'],[0,'p',5,'640,135 665,100'],[0,'N',5,'60,765 72,800'],
 [1,'C',6,'195,97 205,82 228,77 255,85 265,100'],[1,'P',4,'75,100 100,92 125,105'],[1,'r',3,'133,118 155,106 188,118'],[1,'Y',5,'8,66 30,58 50,66'],
 [1,'P',5,'185,350 215,345 250,355 263,380 268,410'],[1,'R',4,'318,484 345,488 358,510 360,528'],[1,'R',4,'42,353 72,350 79,338'],[1,'Y',4,'484,420 512,430 530,455 535,470 550,480'],
 [1,'Y',5,'112,205 145,205'],[1,'c',4,'112,470 140,457 175,465 190,485'],[1,'g',4,'252,432 285,438 300,465 303,485'],[1,'g',6,'185,560 195,590 198,640 215,685'],[1,'G',6,'206,655 245,692'],
 [1,'g',5,'140,556 175,565 190,590'],[1,'o',8,'190,650 215,690 240,712 255,750 258,790'],[1,'N',3,'0,498 40,508 90,520'],[1,'r',7,'70,530 100,520 140,522 185,538'],
 [1,'m',5,'145,500 200,525 240,580 270,600'],[1,'M',4,'170,550 205,560 240,595'],[1,'N',5,'240,625 280,690 300,760 300,800'],[1,'p',5,'205,600 245,640 290,710'],
 [1,'b',4,'300,600 325,605 330,640'],[1,'l',5,'308,655 330,672 335,720'],[1,'C',5,'340,715 360,720 358,760'],[1,'L',5,'258,580 285,575'],[1,'C',5,'195,505 235,515'],[1,'g',4,'440,705 452,730 447,770 430,790'],
 [1,'G',3,'388,618 408,638'],[1,'g',4,'0,358 40,368'],[1,'p',6,'600,430 628,430 628,465 612,490'],[1,'b',4,'735,720 738,780'],[1,'L',7,'725,720 728,790'],[1,'g',6,'670,590 680,650'],[1,'R',3,'655,625 680,650 678,680'],
 [1,'B',3,'550,312 575,335'],[1,'N',6,'645,540 665,545'],[1,'b',4,'595,620 630,630 645,680 650,740'],[1,'l',6,'590,600 610,620'],
 [2,'L',4,'185,245 176,280 190,310 232,320'],[2,'Y',6,'410,543 425,537 440,560 475,578 515,562'],[2,'Y',6,'555,605 612,605'],[2,'O',4,'618,345 635,365 665,376 705,362'],[2,'O',4,'525,285 540,310 570,325'],
 [2,'G',3,'357,103 353,125 372,150'],[2,'P',4,'608,240 612,275 635,297 685,298'],[2,'R',6,'690,296 705,303 735,316 778,305'],[2,'R',2.5,'255,480 280,508 300,515'],[2,'P',3,'247,465 268,482'],
 [2,'P',4,'305,113 322,127'],[2,'l',5,'455,198 490,205'],[2,'C',4,'475,215 500,240'],[2,'L',4,'525,260 555,272'],[2,'m',5,'490,130 520,180 580,230'],[2,'M',5,'500,145 530,190 575,215'],
 [2,'N',3,'515,180 560,230 600,240'],[2,'g',5,'600,215 625,225'],[2,'Y',4,'55,130 58,170 68,180'],[2,'B',2.5,'448,690 475,695 495,690'],[2,'B',2.5,'140,402 165,412'],[2,'Y',6,'132,338 145,360'],[2,'l',5,'645,645 690,665 735,655'],
 [2,'G',2.5,'685,445 710,435'],[2,'B',2.5,'590,330 610,345 630,340'],[2,'R',3,'758,715 780,720'],[2,'b',2.5,'595,730 620,732'],
 [3,'R',4,'118,462 155,450 170,420 210,415'],[3,'P',4,'75,520 105,500 118,475'],[3,'P',4,'250,422 300,410 320,370'],[3,'c',6,'485,450 478,490 445,515 412,532 405,565 350,582 300,568'],
 [3,'G',5,'5,278 40,280 65,272'],[3,'G',6,'278,10 285,45 275,85'],[3,'o',7,'258,0 262,40 272,70'],[3,'L',4,'318,95 312,135'],[3,'C',6,'350,85 340,110'],[3,'l',4,'325,85 300,145'],
 [3,'N',4,'300,0 300,60'],[3,'m',6,'310,0 315,60'],[3,'C',4,'255,245 300,225'],[3,'C',5,'265,250 300,215'],[3,'B',3,'265,245 260,290'],[3,'b',4,'180,340 215,325 235,330'],[3,'P',4,'30,290 90,290 130,280'],
 [3,'p',5,'10,300 60,305 130,295 170,270'],[3,'n',5,'60,310 100,300'],[3,'P',4,'180,230 220,200 222,170'],[3,'r',5,'220,190 270,180 290,150'],[3,'N',6,'710,110 710,155 690,190'],
 [3,'C',4,'565,290 545,325 530,365'],[3,'P',4,'575,435 550,465 530,460'],[3,'P',4,'265,660 310,662 345,635'],[3,'C',4,'265,595 300,578'],[3,'l',7,'215,620 265,590'],[3,'R',3,'5,728 35,725 50,705'],
 [3,'L',6,'5,740 25,738'],[3,'l',5,'35,735 80,735'],[3,'L',5,'90,735 140,725'],[3,'R',4,'470,510 485,500'],[3,'M',6,'350,655 395,600'],[3,'L',6,'380,655 385,625'],[3,'O',4,'317,215 340,180']
];
const marks = [], labels = [], cells = new Map();
function add(color, x, y, r) {
  marks.push([color, x, y, r]);
  for (let i = Math.floor((x - r) / 12); i <= (x + r) / 12; i++)
    for (let j = Math.floor((y - r) / 12); j <= (y + r) / 12; j++) {
      const k = i + ':' + j;
      if (!cells.has(k)) cells.set(k, []);
      cells.get(k).push([x, y, r]);
    }
}
function free(x, y, r) {
  for (let i = Math.floor((x - r) / 12); i <= (x + r) / 12; i++)
    for (let j = Math.floor((y - r) / 12); j <= (y + r) / 12; j++)
      for (const c of cells.get(i + ':' + j) || [])
        if (Math.hypot(c[0] - x, c[1] - y) < c[2] + r - .1) return false;
  return true;
}
for (const t of TILES)
  for (const key in t) {
    if (key === 'left' || key === 'top') continue;
    const color = key === 'kings' ? 'o' : key === 'bronx' ? 'O' : key;
    for (const s of t[key].split(' ')) {
      const [a, b, r] = s.split(',').map(Number), x = t.left + a / 3, y = t.top + b / 3;
      add(color, x, y, r / 3);
      if (key.length > 1) labels.push([key === 'kings' ? 'Kings' : 'Bronx', x, y]);
    }
  }
for (const [ti, color, r, line] of CHAINS) {
  const t = TILES[ti], pts = line.split(' ').map(p => p.split(',').map(Number));
  let carry = 0;
  for (let i = 1; i < pts.length; i++) {
    const [x0, y0] = pts[i - 1], [x1, y1] = pts[i], d = Math.hypot(x1 - x0, y1 - y0);
    let s = carry;
    for (; s <= d; s += r * 2.15) {
      const x = t.left + (x0 + (x1 - x0) * s / d) / 3, y = t.top + (y0 + (y1 - y0) * s / d) / 3;
      if (free(x, y, r / 3 * .6)) add(color, x, y, r / 3);
    }
    carry = s - d;
  }
}
let seed = 2728;
function rnd() {
  seed = (seed + 0x6D2B79F5) | 0;
  let t = Math.imul(seed ^ (seed >>> 15), 1 | seed);
  t = (t + Math.imul(t ^ (t >>> 7), 61 | t)) ^ t;
  return ((t ^ (t >>> 14)) >>> 0) / 4294967296;
}
function fill(cx, cy, r0, r1, size, tries, palette) {
  for (let i = 0; i < tries; i++) {
    const a = rnd() * Math.PI * 2, d = Math.sqrt(r0 * r0 + rnd() * (r1 * r1 - r0 * r0));
    const x = cx + Math.cos(a) * d, y = cy + Math.sin(a) * d, r = size * (.9 + rnd() * .2);
    const zone = Math.floor(a * 9) * 7 + Math.floor(d / 9) * 3;
    const color = palette[rnd() < .5 ? zone % palette.length : Math.floor(rnd() * palette.length)];
    if (free(x, y, r)) add(color, x, y, r);
  }
}
fill(740, 478, 28, 37, 1.1, 500, 'b');
for (const s of [3.2, 2.4, 1.8, 1.2]) fill(741, 481, 88, 120, s, 2600, 'mnrgmpNylMPoc');
for (const s of [3.6, 2.8, 2.1, 1.4]) fill(741, 481, 208, 241, s, 3600, 'ymMlbcCpgnoLPYNr');
fill(741, 481, 192, 208, 2, 600, 'mnypMl');
fill(741, 481, 239, 244, 1.5, 500, 'ybClMLPc');

const NS = 'http://www.w3.org/2000/svg', view = document.getElementById('view');
function el(name, attrs, text) {
  const e = document.createElementNS(NS, name);
  for (const k in attrs) e.setAttribute(k, attrs[k]);
  if (text) e.textContent = text;
  view.appendChild(e);
}
el('path', { d: 'M478.5 178v567M1004.5 178v567M428 218.500h577M428 744.500h577', stroke: '#d6d6d6', fill: 'none' });
marks.sort((a, b) => a[3] - b[3]);
for (const [c, x, y, r] of marks) el('circle', { cx: x.toFixed(2), cy: y.toFixed(2), r: r.toFixed(2), fill: COLORS[c] });
for (const [s, x, y] of labels) el('text', { x: x.toFixed(1), y: (y + 2.3).toFixed(1) }, s);
```
